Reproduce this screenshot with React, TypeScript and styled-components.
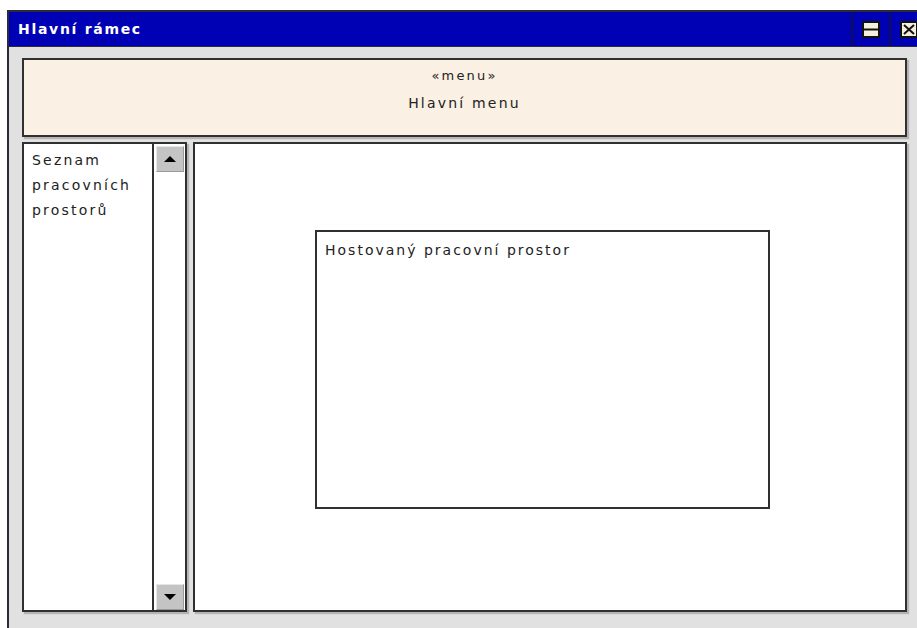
import styled, { createGlobalStyle } from "styled-components";

const GlobalStyle = createGlobalStyle`
  html, body {
    margin: 0;
    padding: 0;
    background: #ffffff;
    overflow: hidden;
  }
  body {
    font-family: "DejaVu Sans", "Liberation Sans", sans-serif;
    color: #222;
  }
`;

const Page = styled.div`
  width: 917px;
  height: 628px;
  padding: 10px 0 0 7px;
  box-sizing: border-box;
  overflow: hidden;
`;

const Window = styled.div`
  width: 922px;
  height: 640px;
  box-sizing: border-box;
  border: 2px solid #2a2a3a;
  background: #e1e1e1;
  display: flex;
  flex-direction: column;
`;

const TitleBar = styled.div`
  height: 34px;
  flex-shrink: 0;
  display: flex;
  align-items: stretch;
  background: #0000b4;
  border-bottom: 1px solid #2a2a3a;
`;

const Title = styled.div`
  flex: 1;
  display: flex;
  align-items: center;
  padding-left: 9px;
  color: #fff;
  font-size: 14px;
  font-weight: bold;
  letter-spacing: 1.7px;
`;

const TitleButton = styled.div`
  width: 36px;
  display: flex;
  align-items: center;
  justify-content: center;
  border-left: 2px solid #101050;
`;

const Body = styled.div`
  flex: 1;
  display: flex;
  flex-direction: column;
  padding: 11px 20px 0 13px;
`;

const Framed = styled.div`
  border: 2px solid #303030;
  box-shadow: 2px 2px 1px #b4b4b4;
  box-sizing: border-box;
`;

const MenuBox = styled(Framed)`
  height: 79px;
  background: #faf0e3;
  display: flex;
  flex-direction: column;
  align-items: center;
  padding-top: 7px;
  gap: 11px;
  font-size: 14px;
  line-height: 17px;
  letter-spacing: 2.2px;
`;

const Stereotype = styled.div`
  font-size: 13px;
`;

const Row = styled.div`
  margin-top: 5px;
  height: 470px;
  display: flex;
  gap: 6px;
`;

const ListBox = styled(Framed)`
  width: 165px;
  background: #fff;
  display: flex;
`;

const ListText = styled.div`
  flex: 1;
  padding: 4px 8px;
  font-size: 14px;
  line-height: 25px;
  letter-spacing: 2.2px;
`;

const ScrollTrack = styled.div`
  width: 31px;
  border-left: 2px solid #303030;
  display: flex;
  flex-direction: column;
  justify-content: space-between;
  align-items: center;
  padding-top: 2px;
`;

const ScrollButton = styled.div`
  width: 28px;
  height: 26px;
  box-sizing: border-box;
  background: #c4c4c4;
  border: 1px solid #e6e6e6;
  border-right-color: #9a9a9a;
  border-bottom-color: #9a9a9a;
  display: flex;
  align-items: center;
  justify-content: center;
`;

const Arrow = styled.div<{ down?: boolean }>`
  width: 0;
  height: 0;
  border-left: 6px solid transparent;
  border-right: 6px solid transparent;
  ${({ down }) =>
    down ? "border-top: 6px solid #000;" : "border-bottom: 6px solid #000;"}
`;

const MainBox = styled(Framed)`
  flex: 1;
  background: #fff;
  padding: 86px 0 0 120px;
`;

const HostedBox = styled.div`
  width: 455px;
  height: 279px;
  box-sizing: border-box;
  border: 2px solid #303030;
  padding: 10px 8px;
  font-size: 14px;
  letter-spacing: 2px;
`;

const RestoreIcon = () => (
  <svg width="18" height="17" viewBox="0 0 18 17">
    <rect x="1" y="1" width="16" height="15" fill="#f7efde" stroke="#111" strokeWidth="2" />
    <line x1="1" y1="8.5" x2="17" y2="8.5" stroke="#111" strokeWidth="2" />
  </svg>
);

const CloseIcon = () => (
  <svg width="18" height="17" viewBox="0 0 18 17">
    <rect x="1" y="1" width="16" height="15" fill="#f7efde" stroke="#111" strokeWidth="2" />
    <path d="M4 4 L14 13 M14 4 L4 13" stroke="#111" strokeWidth="2" />
  </svg>
);

const App = () => {
  return (
    <>
      <GlobalStyle />
      <Page>
        <Window>
          <TitleBar>
            <Title>Hlavní rámec</Title>
            <TitleButton>
              <RestoreIcon />
            </TitleButton>
            <TitleButton>
              <CloseIcon />
            </TitleButton>
          </TitleBar>
          <Body>
            <MenuBox>
              <Stereotype>«menu»</Stereotype>
              <div>Hlavní menu</div>
            </MenuBox>
            <Row>
              <ListBox>
                <ListText>
                  Seznam
                  <br />
                  pracovních
                  <br />
                  prostorů
                </ListText>
                <ScrollTrack>
                  <ScrollButton>
                    <Arrow />
                  </ScrollButton>
                  <ScrollButton>
                    <Arrow down />
                  </ScrollButton>
                </ScrollTrack>
              </ListBox>
              <MainBox>
                <HostedBox>Hostovaný pracovní prostor</HostedBox>
              </MainBox>
            </Row>
          </Body>
        </Window>
      </Page>
    </>
  );
};

export default App;
